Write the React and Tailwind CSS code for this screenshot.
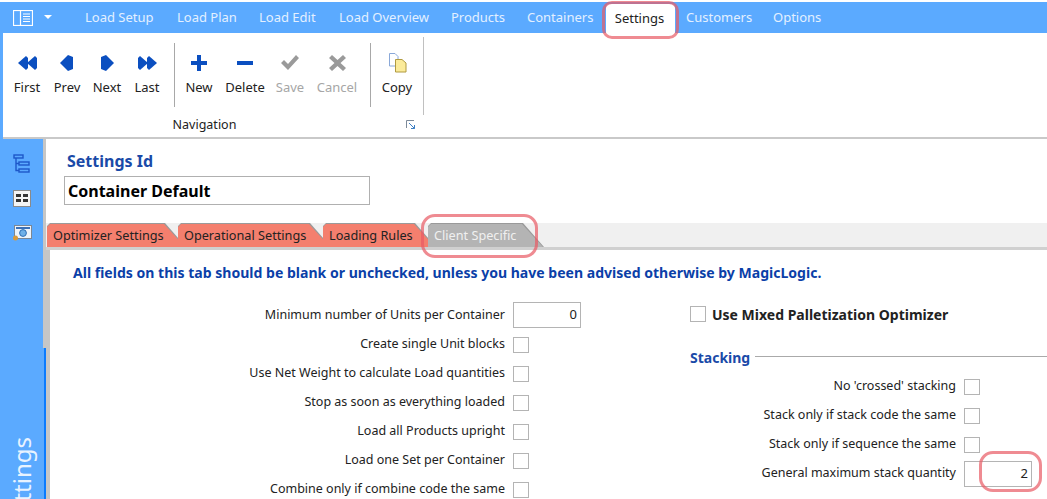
import React from 'react';

const navTabs = [
  { label: 'Load Setup', w: 'w-[92px]' },
  { label: 'Load Plan', w: 'w-[82px]' },
  { label: 'Load Edit', w: 'w-[80px]' },
  { label: 'Load Overview', w: 'w-[112px]' },
  { label: 'Products', w: 'w-[76px]' },
  { label: 'Containers', w: 'w-[79px]' },
];

const leftRows = [
  'Create single Unit blocks',
  'Use Net Weight to calculate Load quantities',
  'Stop as soon as everything loaded',
  'Load all Products upright',
  'Load one Set per Container',
  'Combine only if combine code the same',
];

const rightRows = ["No 'crossed' stacking", 'Stack only if stack code the same', 'Stack only if sequence the same'];

const BLUE = '#0b4fc0';

const Arrow = ({ type }) => {
  const shapes = {
    first: { w: 20, d: ['M9 1 L1 8 L9 15 Z', 'M11 3 L11 13 L9 15 L9 1 Z', 'M18 1 L10 8 L18 15 Z', 'M20 3 L20 13 L18 15 L18 1 Z'] },
    prev: { w: 14, d: ['M8 0 L0 8 L8 16 L13 14 L13 2 Z'] },
    next: { w: 14, d: ['M6 0 L14 8 L6 16 L1 14 L1 2 Z'] },
    last: { w: 20, d: ['M1 3 L1 13 L3 15 L11 8 L3 1 Z', 'M10 3 L10 13 L12 15 L20 8 L12 1 Z'] },
  };
  const s = shapes[type];
  return (
    <svg width={s.w} height="16" viewBox={`0 0 ${s.w} 16`}>
      {s.d.map((d, i) => <path key={i} d={d} fill={BLUE} />)}
    </svg>
  );
};

const RibbonButton = ({ w, icon, label, disabled }) => (
  <div className={`${w} flex flex-col items-center`}>
    <div className="h-[20px] flex items-center justify-center">{icon}</div>
    <span className={`mt-[5px] text-[13px] leading-[18px] ${disabled ? 'text-[#a6a6a6]' : 'text-[#222]'}`}>{label}</span>
  </div>
);

const Checkbox = () => <div className="w-[16px] h-[16px] border border-[#b4b4b4] bg-white shrink-0" />;

const NumberInput = ({ value }) => (
  <div className="w-[68px] h-[26px] border border-[#b4b4b4] bg-white flex items-center justify-end pr-[3px] text-[13px] text-[#222]">{value}</div>
);

const Row = ({ label, h, children }) => (
  <div className={`flex items-center justify-end gap-[8px] ${h}`}>
    <span className="text-[12.5px] text-[#222] whitespace-nowrap">{label}</span>
    <div className="w-[68px] flex">{children}</div>
  </div>
);

const Tab = ({ label, w, grey }) => (
  <div className={`${w} h-[24px] -mr-[8px] bg-[#9a9a9a] [clip-path:polygon(0_3px,3px_0,calc(100%-21px)_0,100%_100%,0_100%)]`}>
    <div className={`h-[23px] mt-[1px] pl-[6px] flex items-center text-[12.7px] whitespace-nowrap [clip-path:polygon(0_3px,3px_0,calc(100%-22px)_0,calc(100%-1px)_100%,0_100%)] ${grey ? 'bg-[#b4b4b4] text-[#f0f0f0]' : 'bg-[#f47f6e] text-[#222]'}`}>
      {label}
    </div>
  </div>
);

export default function App() {
  return (
    <div className="relative w-[1047px] h-[499px] overflow-hidden bg-white flex flex-col font-['Noto_Sans',sans-serif]">
      {/* Title tabs */}
      <div className="mt-[2px] h-[31px] shrink-0 bg-[#5baaff] flex items-end">
        <div className="w-[85px] h-full flex items-center pl-[13px] gap-[11px]">
          <svg width="20" height="16" viewBox="0 0 20 16" fill="none" stroke="#fff">
            <rect x="0.5" y="0.5" width="19" height="15" strokeWidth="1.2" />
            <path d="M7.5 0.5 V15.5" strokeWidth="1.2" />
            <path d="M10 4 H17 M10 6.5 H17 M10 9 H17 M10 11.5 H17" strokeWidth="1" />
          </svg>
          <svg width="8" height="5" viewBox="0 0 8 5"><path d="M0 0 H8 L4 4 Z" fill="#fff" /></svg>
        </div>
        {navTabs.map((t) => (
          <div key={t.label} className={`${t.w} h-full flex items-center text-[13px] text-[#e3f0ff] whitespace-nowrap`}>{t.label}</div>
        ))}
        <div className="w-[69px] h-[29px] mr-[11px] pr-[2px] bg-white rounded-t-[4px] flex items-center justify-center text-[13px] text-[#222]">Settings</div>
        <div className="w-[87px] h-full flex items-center text-[13px] text-[#e3f0ff]">Customers</div>
        <div className="h-full flex items-center text-[13px] text-[#e3f0ff]">Options</div>
      </div>

      {/* Ribbon */}
      <div className="h-[106px] shrink-0 bg-[#5baaff] pl-[3px]">
        <div className="h-[106px] bg-white border-b-2 border-[#c9c9c9] flex flex-col">
          <div className="flex h-[82px] pt-[20px]">
            <div className="w-[4px]" />
            <RibbonButton w="w-[40px]" label="First" icon={<Arrow type="first" />} />
            <RibbonButton w="w-[40px]" label="Prev" icon={<Arrow type="prev" />} />
            <RibbonButton w="w-[40px]" label="Next" icon={<Arrow type="next" />} />
            <RibbonButton w="w-[40px]" label="Last" icon={<Arrow type="last" />} />
            <div className="w-px h-[64px] -mt-[10px] ml-[7px] bg-[#a8a8a8]" />
            <RibbonButton w="w-[48px]" label="New" icon={
              <svg width="16" height="16" viewBox="0 0 16 16"><path d="M6 0 H10 V6 H16 V10 H10 V16 H6 V10 H0 V6 H6 Z" fill={BLUE} /></svg>
            } />
            <RibbonButton w="w-[44px]" label="Delete" icon={
              <svg width="16" height="16" viewBox="0 0 16 16"><rect y="6" width="16" height="4" fill={BLUE} /></svg>
            } />
            <RibbonButton w="w-[46px]" label="Save" disabled icon={
              <svg width="18" height="16" viewBox="0 0 18 16"><path d="M0 8 L3 5 L7 9 L15 0 L18 3 L7 15 Z" fill="#9a9a9a" /></svg>
            } />
            <RibbonButton w="w-[48px]" label="Cancel" disabled icon={
              <svg width="17" height="16" viewBox="0 0 17 16"><path d="M3 0 L8.5 5 L14 0 L17 3 L11.5 8 L17 13 L14 16 L8.5 11 L3 16 L0 13 L5.5 8 L0 3 Z" fill="#9a9a9a" /></svg>
            } />
            <div className="w-px h-[64px] -mt-[10px] ml-[9px] bg-[#a8a8a8]" />
            <RibbonButton w="w-[52px]" label="Copy" icon={
              <svg width="19" height="20" viewBox="0 0 19 20">
                <path d="M1.5 0.5 H7 L10 3.5 V13 H1.5 Z" fill="#fff" stroke="#8aa8d8" />
                <path d="M7.5 6.5 H14 L18 10 V19 H7.5 Z" fill="#fbeb9a" stroke="#b09a40" />
              </svg>
            } />
            <div className="w-px h-[78px] -mt-[16px] bg-[#c0c0c0]" />
          </div>
          <div className="flex h-[22px] pb-[2px] items-center">
            <span className="w-[403px] text-center text-[12.5px] text-[#222]">Navigation</span>
            <svg width="10" height="10" viewBox="0 0 10 10" fill="none">
              <path d="M0.5 8 V0.5 H8" stroke="#7d8a99" />
              <path d="M3 3 L8.5 8.5 M8.5 5 V8.5 H5" stroke="#3d7fc4" />
            </svg>
          </div>
        </div>
      </div>

      <div className="flex-1 flex min-h-0">
        {/* Side rail */}
        <div className="w-[43px] h-[360px] bg-[#5baaff] shrink-0 flex flex-col items-center pt-[15px] overflow-hidden">
          <svg width="18" height="19" viewBox="0 0 18 19" fill="none" stroke="#1d57c9" strokeWidth="1.4" className="shrink-0">
            <rect x="1" y="1" width="9" height="3" />
            <rect x="6" y="8" width="10" height="3" />
            <rect x="6" y="15" width="10" height="3" />
            <path d="M3 4 V16.5 H6 M3 9.5 H6" />
          </svg>
          <svg width="18" height="17" viewBox="0 0 18 17" className="mt-[17px] shrink-0">
            <rect x="0.5" y="0.5" width="17" height="16" fill="#f4f4f4" stroke="#8a8a8a" />
            <path d="M3 4 H8 V7 H3 Z M10 4 H15 V7 H10 Z M3 9 H8 V12 H3 Z M10 9 H15 V12 H10 Z" fill="#333" />
          </svg>
          <svg width="20" height="18" viewBox="0 0 20 18" className="mt-[17px] shrink-0">
            <rect x="2.5" y="1.5" width="17" height="13" fill="#eef4fb" stroke="#7c8794" />
            <rect x="4" y="3" width="14" height="2" fill="#3a70b8" />
            <circle cx="11" cy="9" r="3.4" fill="#6fb0e8" stroke="#2f6fb5" />
            <circle cx="3.5" cy="14" r="2.5" fill="#d99a3c" />
          </svg>
          <div className="mt-[195px] shrink-0 text-[24px] leading-[28px] text-[#e8f3ff] whitespace-nowrap [writing-mode:vertical-rl] rotate-180">
            Settings
          </div>
        </div>

        {/* Gutter with scroll marker */}
        <div className="w-[7px] h-[360px] shrink-0 bg-white flex flex-col">
          <div className="h-[111px] w-[3px] bg-[#c6c6c6]" />
          <div className="h-[98px] bg-[#c6c6c6]" />
          <div className="flex-1 flex">
            <div className="w-[3px] bg-[#0a7bff] border-l border-[#5baaff]" />
            <div className="w-[4px] bg-[#c6c6c6]" />
          </div>
        </div>

        <div className="flex-1 min-w-0 -ml-[4px]">
          {/* Settings Id */}
          <div className="pl-[18px] pt-[12px] h-[84px]">
            <div className="pl-[3px] text-[16px] leading-[20px] font-bold text-[#1a4aa8]">Settings Id</div>
            <div className="w-[306px] h-[29px] mt-[5px] border border-[#b0b0b0] pl-[3px] flex items-center text-[16px] font-bold text-black">Container Default</div>
          </div>

          {/* Tabs */}
          <div className="h-[24px] bg-[#f0f0f0] flex items-end pl-[1px]">
            <Tab label="Optimizer Settings" w="w-[139px]" />
            <Tab label="Operational Settings" w="w-[153px]" />
            <Tab label="Loading Rules" w="w-[113px]" />
            <Tab label="Client Specific" w="w-[116px]" grey />
          </div>
          <div className="h-[3px] bg-[#d0d0d0]" />

          {/* Form */}
          <div className="pl-[27px] pt-[14px]">
            <div className="h-[18px] flex items-center text-[14.05px] font-bold text-[#0b3fa8] whitespace-nowrap">
              All fields on this tab should be blank or unchecked, unless you have been advised otherwise by MagicLogic.
            </div>
            <div className="flex mt-[20px]">
              <div className="w-[508px] shrink-0">
                <Row label="Minimum number of Units per Container" h="h-[26px]"><NumberInput value="0" /></Row>
                <div className="mt-[2px]">
                  {leftRows.map((r) => (
                    <Row key={r} label={r} h="h-[29px]"><Checkbox /></Row>
                  ))}
                </div>
              </div>
              <div className="ml-[109px] w-[360px] shrink-0 -mt-[1px]">
                <div className="flex items-center gap-[6px] h-[26px]">
                  <Checkbox />
                  <span className="text-[14px] font-bold text-[#222] whitespace-nowrap">Use Mixed Palletization Optimizer</span>
                </div>
                <div className="flex items-center gap-[5px] mt-[21px] h-[18px]">
                  <span className="text-[14px] font-bold text-[#1a4aa8]">Stacking</span>
                  <div className="flex-1 h-px bg-[#aaa] -mt-[2px]" />
                </div>
                <div className="w-[342px] mt-[6px]">
                  {rightRows.map((r) => (
                    <Row key={r} label={r} h="h-[29px]"><Checkbox /></Row>
                  ))}
                  <Row label="General maximum stack quantity" h="h-[29px]"><NumberInput value="2" /></Row>
                </div>
              </div>
            </div>
          </div>
        </div>
      </div>

      {/* Annotation outlines drawn on top of the screenshot */}
      <div className="absolute left-[602px] top-[1px] w-[77px] h-[38px] rounded-[10px] border-[3px] border-[#e85a64b3] pointer-events-none" />
      <div className="absolute left-[421px] top-[214px] w-[117px] h-[44px] rounded-[14px] border-[3px] border-[#e85a64b3] pointer-events-none" />
      <div className="absolute left-[979px] top-[451px] w-[63px] h-[41px] rounded-[14px] border-[3px] border-[#e85a64b3] pointer-events-none" />
    </div>
  );
}
